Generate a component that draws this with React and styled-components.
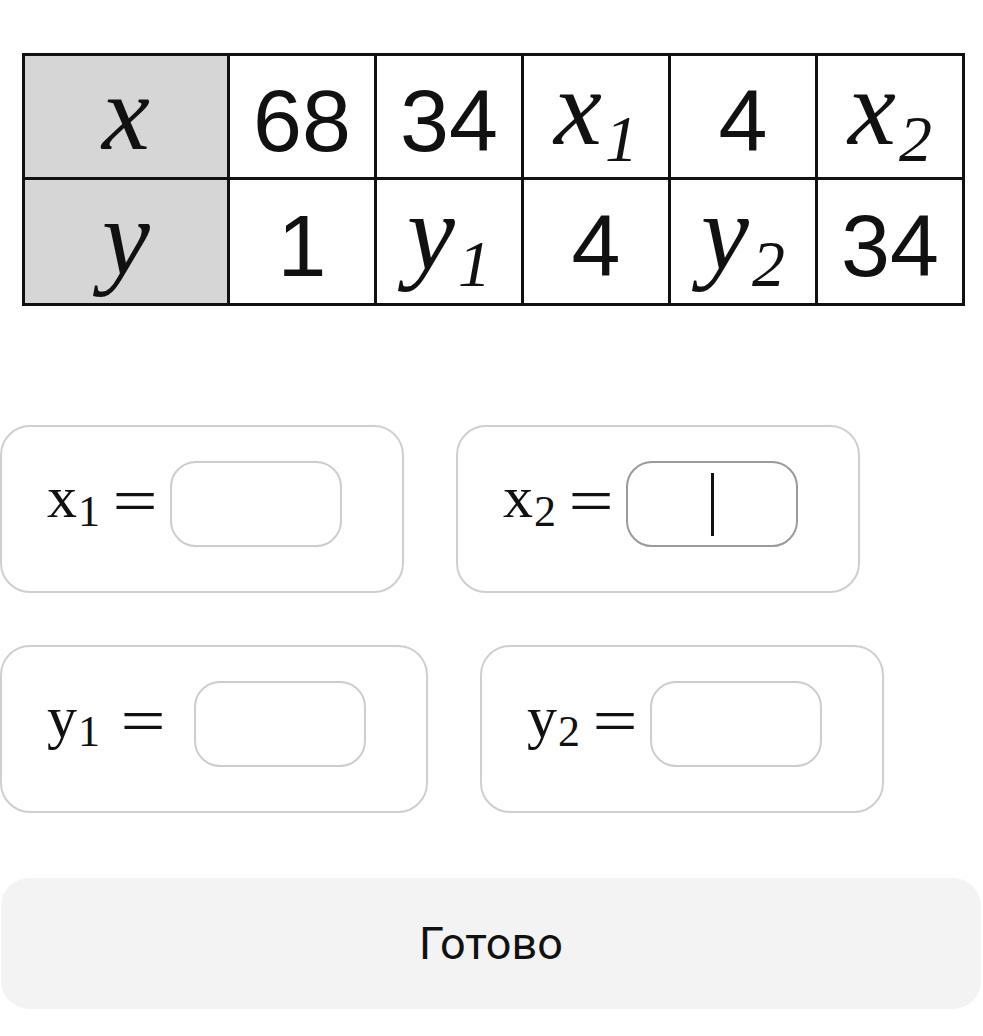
import React from "react";
import styled, { createGlobalStyle } from "styled-components";

const GlobalStyle = createGlobalStyle`
  html, body {
    margin: 0;
    padding: 0;
    background: #fff;
  }
  body {
    font-family: "Liberation Sans", Arial, sans-serif;
    color: #111;
  }
`;

const rows = [
  { head: "x", cells: [{ n: "68" }, { n: "34" }, { v: "x", s: "1" }, { n: "4" }, { v: "x", s: "2" }] },
  { head: "y", cells: [{ n: "1" }, { v: "y", s: "1" }, { n: "4" }, { v: "y", s: "2" }, { n: "34" }] },
];

const fields = [
  [
    { v: "x", s: "1" },
    { v: "x", s: "2", active: true },
  ],
  [
    { v: "y", s: "1", loose: true },
    { v: "y", s: "2" },
  ],
];

function App() {
  return (
    <Page>
      <GlobalStyle />
      <Table>
        {rows.map((row, r) => (
          <React.Fragment key={r}>
            <Cell $head>
              <MathVar>{row.head}</MathVar>
            </Cell>
            {row.cells.map((c, i) => (
              <Cell key={i}>
                {c.n ? (
                  <Num>{c.n}</Num>
                ) : (
                  <MathVar>
                    {c.v}
                    <MathSub>{c.s}</MathSub>
                  </MathVar>
                )}
              </Cell>
            ))}
          </React.Fragment>
        ))}
      </Table>

      <Answers>
        {fields.map((line, i) => (
          <AnswerRow key={i}>
            {line.map((f) => (
              <Card key={f.v + f.s}>
                <Label>
                  {f.v}
                  <LabelSub>{f.s}</LabelSub>
                </Label>
                <Eq $loose={f.loose}>=</Eq>
                <Field $active={f.active}>{f.active && <Caret />}</Field>
              </Card>
            ))}
          </AnswerRow>
        ))}
      </Answers>

      <DoneButton>Готово</DoneButton>
    </Page>
  );
}

const Page = styled.div`
  width: 983px;
  padding-top: 53px;
  display: flex;
  flex-direction: column;
`;

const Table = styled.div`
  margin-left: 22px;
  display: grid;
  grid-template-columns: 202px repeat(5, 144px);
  grid-template-rows: 121px 123px;
  gap: 3px;
  padding: 3px;
  width: max-content;
  background: #111;
`;

const Cell = styled.div`
  display: flex;
  align-items: center;
  justify-content: center;
  background: ${(p) => (p.$head ? "#d6d6d6" : "#fff")};
`;

const Num = styled.span`
  font-family: "Liberation Sans", Arial, sans-serif;
  font-size: 88px;
  line-height: 1;
  margin-top: 8px;
`;

const MathVar = styled.span`
  font-family: "Liberation Serif", "Times New Roman", serif;
  font-style: italic;
  font-size: 108px;
  line-height: 1;
  margin-bottom: 8px;
`;

const MathSub = styled.span`
  font-size: 66px;
  margin-left: 3px;
  vertical-align: -17px;
`;

const Answers = styled.div`
  margin-top: 119px;
  display: flex;
  flex-direction: column;
  gap: 52px;
`;

const AnswerRow = styled.div`
  display: flex;
  gap: 52px;
`;

const Card = styled.div`
  display: flex;
  align-items: center;
  padding: 34px 60px 44px 45px;
  border: 2px solid #cfcfcf;
  border-radius: 30px;
`;

const Label = styled.span`
  font-family: "Liberation Serif", "Times New Roman", serif;
  font-size: 60px;
  line-height: 1;
  margin-bottom: 8px;
`;

const LabelSub = styled.span`
  font-size: 44px;
  margin-left: 1px;
  vertical-align: -9px;
`;

const Eq = styled.span`
  font-family: "Liberation Serif", "Times New Roman", serif;
  font-size: 64px;
  line-height: 1;
  display: inline-block;
  transform: scaleX(1.25);
  margin: 0 ${(p) => (p.$loose ? "33px" : "17px")} 6px ${(p) => (p.$loose ? "25px" : "17px")};
`;

const Field = styled.div`
  width: 168px;
  height: 82px;
  border: 2px solid ${(p) => (p.$active ? "#9a9a9a" : "#cdcdcd")};
  border-radius: 26px;
  display: flex;
  align-items: center;
  justify-content: center;
  background: #fff;
`;

const Caret = styled.span`
  width: 3px;
  height: 63px;
  background: #111;
`;

const DoneButton = styled.button`
  margin: 65px 0 0 1px;
  width: 980px;
  height: 131px;
  border: none;
  border-radius: 28px;
  background: #f3f3f3;
  color: #111;
  font-family: Roboto, "Noto Sans", sans-serif;
  font-size: 45px;
  cursor: pointer;
`;

export default App;
